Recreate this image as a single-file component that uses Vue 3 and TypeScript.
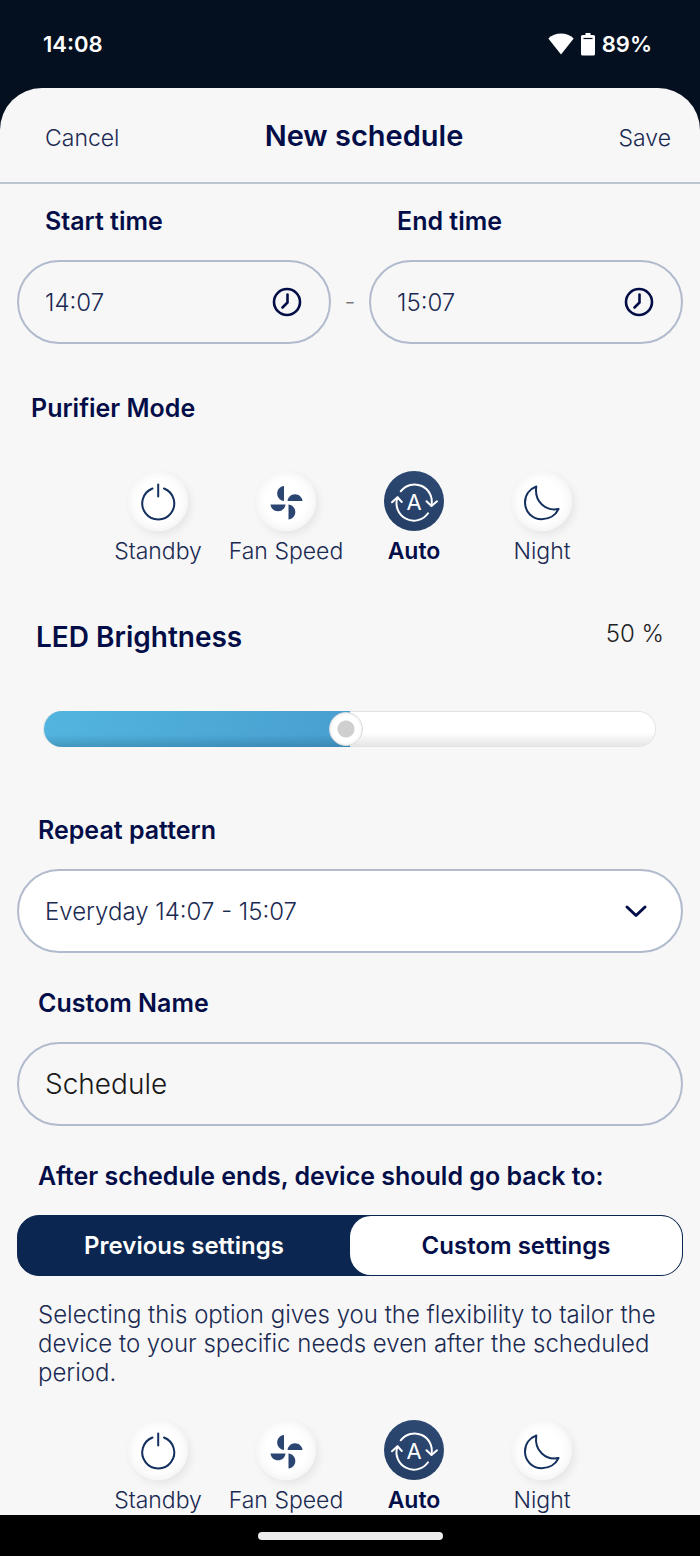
<script setup lang="ts">
import { ref } from 'vue'

type Mode = 'standby' | 'fan' | 'auto' | 'night'

const modes: { id: Mode; label: string }[] = [
  { id: 'standby', label: 'Standby' },
  { id: 'fan', label: 'Fan Speed' },
  { id: 'auto', label: 'Auto' },
  { id: 'night', label: 'Night' },
]

const startTime = ref('14:07')
const endTime = ref('15:07')
const brightness = ref(50)
const repeat = ref('everyday')
const name = ref('Schedule')
const after = ref<'previous' | 'custom'>('previous')

const groups = ref<{ key: string; title: string; selected: Mode }[]>([
  { key: 'during', title: 'Purifier Mode', selected: 'auto' },
  { key: 'after', title: 'Mode after schedule', selected: 'auto' },
])
</script>

<template>
  <div class="screen">
    <div class="status">
      <span>14:08</span>
      <span class="status-right">
        <svg width="26" height="22" viewBox="0 0 26 22" aria-hidden="true">
          <path d="M13 21.5 0.3 5.6C3.8 2.4 8.2 0.6 13 0.6s9.2 1.8 12.7 5z" fill="#fff" />
        </svg>
        <svg width="14" height="23" viewBox="0 0 14 23" aria-hidden="true">
          <path d="M4.5 0h5v2H12.500a1.500 1.500 0 0 1 1.500 1.500V21a1.500 1.500 0 0 1-1.500 1.500h-11A1.500 1.500 0 0 1 0 21V3.500A1.500 1.500 0 0 1 1.500 2h3z" fill="#fff" />
          <path d="M2.500 5.500h9" stroke="#04101f" stroke-width="1.200" />
        </svg>
        <span>89%</span>
      </span>
    </div>

    <main class="sheet">
      <header class="head">
        <button type="button" class="link">Cancel</button>
        <h1>New schedule</h1>
        <button type="button" class="link save">Save</button>
      </header>

      <form class="form" @submit.prevent>
        <div class="times">
          <div class="field">
            <label class="label indent" for="start">Start time</label>
            <div class="pill">
              <input id="start" v-model="startTime" type="text" />
              <svg class="clock" width="30" height="30" viewBox="0 0 30 30" aria-hidden="true">
                <circle cx="15" cy="15" r="13" stroke-width="2.600" />
                <path d="M15.500 7.500v8l-5 5" stroke-width="2.600" />
              </svg>
            </div>
          </div>
          <span class="dash">-</span>
          <div class="field">
            <label class="label indent" for="end">End time</label>
            <div class="pill">
              <input id="end" v-model="endTime" type="text" />
              <svg class="clock" width="30" height="30" viewBox="0 0 30 30" aria-hidden="true">
                <circle cx="15" cy="15" r="13" stroke-width="2.600" />
                <path d="M15.500 7.500v8l-5 5" stroke-width="2.600" />
              </svg>
            </div>
          </div>
        </div>

        <template v-for="group in groups" :key="group.key">
          <template v-if="group.key === 'after'">
            <div class="light">
              <div class="light-head">
                <label for="led">LED Brightness</label>
                <output for="led">{{ brightness }} %</output>
              </div>
              <div class="slider">
                <div class="fill" :style="{ width: brightness + '%' }"></div>
                <input id="led" v-model.number="brightness" type="range" min="0" max="100" />
              </div>
            </div>

            <div class="field">
              <label class="label" for="repeat">Repeat pattern</label>
              <div class="pill white">
                <select id="repeat" v-model="repeat">
                  <option value="everyday">Everyday {{ startTime }} - {{ endTime }}</option>
                </select>
                <svg class="chevron" width="24" height="24" viewBox="0 0 24 24" aria-hidden="true">
                  <path d="M3 8l9 8.500 9-8.500" stroke-width="3" />
                </svg>
              </div>
            </div>

            <div class="field">
              <label class="label" for="name">Custom Name</label>
              <div class="pill">
                <input id="name" v-model="name" class="big" type="text" />
              </div>
            </div>

            <div class="after">
              <h2 class="label">After schedule ends, device should go back to:</h2>
              <div class="segments">
                <button type="button" :class="{ on: after === 'previous' }" :aria-pressed="after === 'previous'" @click="after = 'previous'">Previous settings</button>
                <button type="button" :class="{ on: after === 'custom' }" :aria-pressed="after === 'custom'" @click="after = 'custom'">Custom settings</button>
              </div>
              <p>Selecting this option gives you the flexibility to tailor the device to your specific needs even after the scheduled period.</p>
            </div>
          </template>
          <h2 v-else class="label mode-title">{{ group.title }}</h2>

          <div class="modes" role="radiogroup" :aria-label="group.title">
            <label v-for="mode in modes" :key="mode.id" class="mode" :class="{ active: group.selected === mode.id }">
              <input v-model="group.selected" type="radio" :name="group.key" :value="mode.id" />
              <span class="knob">
                <svg width="60" height="60" viewBox="0 0 60 60" aria-hidden="true">
                  <g v-if="mode.id === 'standby'" class="line">
                    <path d="M24.500 17.500A16 16 0 1 0 36 17.500" />
                    <path d="M30.200 13.500v12" />
                  </g>
                  <g v-else-if="mode.id === 'fan'" class="solid">
                    <path d="M28 15v15c-4-.5-6.800-3.500-6.800-7.500s2.800-7 6.800-7.500z" />
                    <path d="M31.500 30c.5-4 3.500-6.800 7.500-6.800s7 2.800 7.500 6.800z" />
                    <path d="M14.500 33.500h15c-.5 4-3.500 6.800-7.500 6.800s-7-2.800-7.500-6.800z" />
                    <path d="M32.500 33.500v15c4-.5 6.800-3.500 6.800-7.500s-2.800-7-6.800-7.500z" />
                  </g>
                  <g v-else-if="mode.id === 'auto'" class="line">
                    <path d="M16.700 20.300A17.300 17.300 0 0 1 47.400 34.500" />
                    <path d="M42.500 30.300l5 4.700 5.500-4.700" />
                    <path d="M44 42.200A17.300 17.300 0 0 1 13.500 26.500" />
                    <path d="M8 31.300l5.500-5 4.300 4.700" />
                    <text x="30" y="39" text-anchor="middle">A</text>
                  </g>
                  <g v-else class="line">
                    <path d="M24.300 15.500C17.500 18 13 24 13 31.500c0 9.500 7.500 16.800 16.700 16.800 7.500 0 14-4 16.800-10.300C34 40.500 22 31 24.300 15.500z" />
                  </g>
                </svg>
              </span>
              <span>{{ mode.label }}</span>
            </label>
          </div>
        </template>
      </form>
    </main>

    <footer class="nav"><span></span></footer>
  </div>
</template>

<style>
body {
  margin: 0;
}
</style>

<style scoped>
* {
  box-sizing: border-box;
}

.screen {
  display: flex;
  flex-direction: column;
  min-height: 100vh;
  background: #04101f;
  color: #1b2a52;
  font-family: Inter, "Liberation Sans", sans-serif;
  font-size: 24px;
  font-weight: 300;
  line-height: 29px;
}

button,
input,
select {
  font: inherit;
  color: inherit;
  border: 0;
  padding: 0;
  margin: 0;
  background: none;
}

h1,
h2,
p {
  margin: 0;
}

.status {
  display: flex;
  justify-content: space-between;
  align-items: center;
  height: 88px;
  padding: 0 48px 0 43px;
  color: #fff;
  font-size: 22px;
  font-weight: 600;
}

.status-right {
  display: flex;
  align-items: center;
  gap: 7px;
}

.sheet {
  flex: 1;
  background: #f7f7f7;
  border-radius: 42px 42px 0 0;
}

.head {
  display: grid;
  grid-template-columns: 1fr auto 1fr;
  align-items: baseline;
  height: 96px;
  padding: 30px 17px 0 45px;
  border-bottom: 2px solid #bcc5d2;
}

.head h1 {
  font-size: 29px;
  line-height: 36px;
  font-weight: 600;
  color: #030e48;
}

.link {
  justify-self: start;
  font-size: 23px;
  cursor: pointer;
}

.save {
  justify-self: end;
  margin-right: 12px;
}

.form {
  padding: 23px 17px 0;
}

.times {
  display: flex;
  align-items: flex-end;
}

.times .field {
  flex: 1;
  min-width: 0;
  margin: 0;
}

.dash {
  width: 38px;
  line-height: 84px;
  text-align: center;
  color: #777;
}

.field {
  margin-bottom: 36px;
}

.label {
  display: block;
  margin: 0 0 24px 21px;
  font-size: 25px;
  line-height: 29px;
  font-weight: 600;
  color: #030e48;
}

.indent {
  margin-left: 28px;
}

.pill {
  display: flex;
  align-items: center;
  height: 84px;
  padding: 0 27px 0 26px;
  border: 2px solid #b1bbcd;
  border-radius: 42px;
}

.pill input,
.pill select {
  flex: 1;
  min-width: 0;
  width: 100%;
  height: 80px;
  outline: none;
}

.pill select {
  appearance: none;
}

.pill .big {
  font-size: 28px;
  color: #181818;
}

.white {
  background: #fff;
  padding-right: 33px;
}

.clock,
.chevron {
  flex: none;
  fill: none;
  stroke: #030e48;
  stroke-linecap: round;
  stroke-linejoin: round;
  pointer-events: none;
}

.mode-title {
  margin: 50px 0 48px 14px;
}

.modes {
  display: grid;
  grid-template-columns: repeat(4, 1fr);
  max-width: 512px;
  margin: 0 auto;
}

.mode {
  position: relative;
  display: flex;
  flex-direction: column;
  align-items: center;
  gap: 6px;
  font-size: 23px;
  white-space: nowrap;
  cursor: pointer;
}

.mode input {
  position: absolute;
  opacity: 0;
}

.knob {
  display: flex;
  width: 60px;
  height: 60px;
  border-radius: 50%;
  background: radial-gradient(circle, #fff 0 20px, #f9f9f9 28px);
  border: 2px solid #f7f7f7;
  background-clip: padding-box;
  align-items: center;
  justify-content: center;
  box-shadow: 3px 4px 8px rgba(0, 0, 0, 0.07);
}

.knob svg {
  flex: none;
}

.line {
  fill: none;
  stroke: #14305f;
  stroke-width: 2;
  stroke-linecap: round;
  stroke-linejoin: round;
}

.line text {
  fill: #fff;
  stroke: none;
  font-size: 22px;
  font-weight: 400;
}

.solid {
  fill: #2a4572;
}

.active {
  font-weight: 600;
  color: #030e48;
}

.active .knob {
  background: linear-gradient(200deg, #2e4a73, #243d65);
  border: 0;
  box-shadow: none;
}

.active .line {
  stroke: #fff;
}

.active .solid {
  fill: #fff;
}

.light {
  margin: 53px 0 70px;
  padding: 0 19px;
}

.light-head {
  display: flex;
  justify-content: space-between;
  align-items: flex-start;
  color: #222;
}

.light-head label {
  font-size: 28px;
  line-height: 36px;
  font-weight: 600;
  color: #030e48;
}

.slider {
  position: relative;
  display: flex;
  height: 34px;
  margin: 57px 9px 0 8px;
  border-radius: 17px;
  background: linear-gradient(#fff 60%, #e6e6e6);
  box-shadow: 0 0 0 1px #e2e2e2;
}

.fill {
  position: absolute;
  inset: -1px auto -1px 0;
  border-radius: 18px 0 0 18px;
  background: linear-gradient(rgba(0, 40, 60, 0) 65%, rgba(0, 40, 60, 0.2)), linear-gradient(100deg, #53b5df, #489fd0);
}

.slider input {
  position: relative;
  flex: 1;
  height: 34px;
  margin-right: 8px;
  appearance: none;
  cursor: pointer;
}

.slider input::-webkit-slider-thumb {
  appearance: none;
  width: 34px;
  height: 34px;
  border: 1px solid #dcdcdc;
  border-radius: 50%;
  background: radial-gradient(circle, #cfcfcf 0 8px, #fff 9px 13px, #f1f1f1 17px);
}

.segments {
  display: grid;
  grid-template-columns: 1fr 1fr;
  height: 61px;
  border: 1px solid #0b2650;
  border-radius: 22px;
  background: #0b2650;
}

.segments button {
  border-radius: 21px;
  background: #fff;
  color: #030e48;
  font-weight: 600;
  cursor: pointer;
}

.segments .on {
  background: #0b2650;
  color: #fff;
}

.after p {
  margin: 24px 19px 33px 21px;
}

.nav {
  display: flex;
  align-items: center;
  justify-content: center;
  height: 41px;
  background: #000;
}

.nav span {
  width: 185px;
  height: 8px;
  border-radius: 4px;
  background: #ececec;
}
</style>
